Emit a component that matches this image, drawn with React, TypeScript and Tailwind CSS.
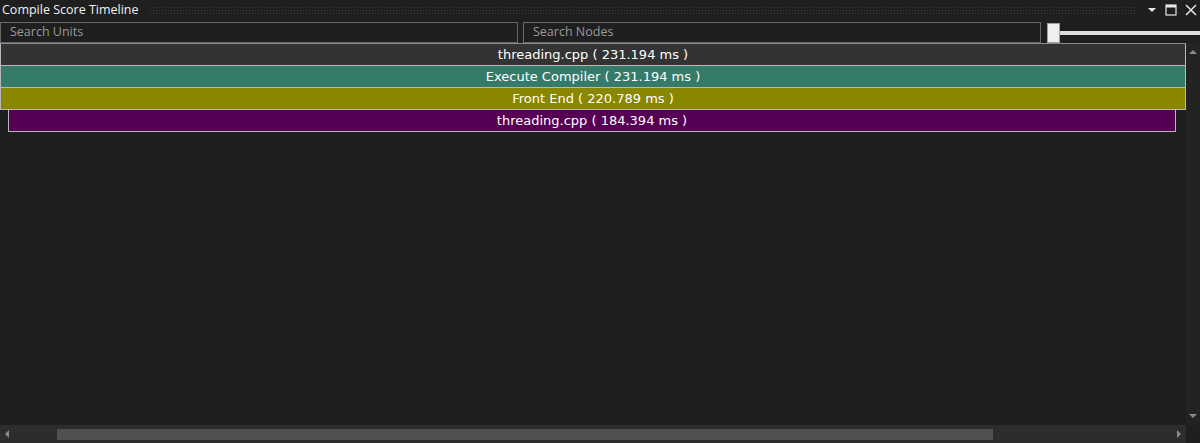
const bars = [
  { label: 'threading.cpp ( 231.194 ms )', color: '#333333', left: 0, right: 0 },
  { label: 'Execute Compiler ( 231.194 ms )', color: '#367b6a', left: 0, right: 0 },
  { label: 'Front End ( 220.789 ms )', color: '#898600', left: 0, right: 0 },
  { label: 'threading.cpp ( 184.394 ms )', color: '#550052', left: 8, right: 10 },
];

function SearchBox({ placeholder }: { placeholder: string }) {
  return (
    <div className="flex h-[21px] w-[518px] items-center border border-[#686868] bg-[#1f1f1f] px-[9px] text-[12.5px] text-[#9a9a9a]">
      {placeholder}
    </div>
  );
}

export default function App() {
  return (
    <div
      className="flex h-[443px] w-[1200px] flex-col overflow-hidden bg-[#1f1f1f] text-white"
      style={{ fontFamily: '"Open Sans", "Noto Sans", sans-serif' }}
    >
      {/* tool window title */}
      <div className="flex h-[19px] items-center pt-[1px]">
        <span className="pl-[2px] pr-[8px] text-[12.5px] leading-none text-[#f1f1f1]">Compile Score Timeline</span>
        <div className="mx-[2px] h-[9px] flex-1 bg-[radial-gradient(#3c3c3c_0.9px,transparent_1px)] bg-[length:3px_3px]" />
        <div className="flex items-center gap-[8px] pl-[8px] pr-[3px]">
          <svg width="10" height="6" viewBox="0 0 10 6">
            <path d="M1 1h8L5 5z" fill="#e6e6e6" />
          </svg>
          <svg width="12" height="12" viewBox="0 0 12 12">
            <rect x="1" y="1" width="10" height="10" fill="none" stroke="#e6e6e6" strokeWidth="1.2" />
            <rect x="1" y="1" width="10" height="2.5" fill="#e6e6e6" />
          </svg>
          <svg width="12" height="12" viewBox="0 0 12 12">
            <path d="M1 1l10 10M11 1L1 11" stroke="#e6e6e6" strokeWidth="1.5" />
          </svg>
        </div>
      </div>

      {/* search row */}
      <div className="mt-[3px] flex h-[21px] items-center gap-[5px]">
        <SearchBox placeholder="Search Units" />
        <SearchBox placeholder="Search Nodes" />
        <div className="ml-[1px] flex h-[21px] flex-1 items-center">
          <div className="z-10 h-[20px] w-[13px] border border-[#a0a0a0] bg-[#efefef]" />
          <div className="h-[4px] flex-1 bg-[#dcdcdc]" />
        </div>
      </div>

      {/* timeline + vertical scrollbar */}
      <div className="flex flex-1">
        <div className="flex flex-1 flex-col border-t border-[#8a8a8a]">
          {bars.map((b) => (
            <div
              key={b.label + b.color}
              className="flex h-[22px] items-center justify-center border border-t-0 border-[#b8b8b8] text-white"
              style={{
                backgroundColor: b.color,
                marginLeft: b.left,
                marginRight: b.right,
                fontFamily: '"DejaVu Sans", Verdana, sans-serif',
                fontSize: 13,
              }}
            >
              {b.label}
            </div>
          ))}
        </div>
        <div className="flex w-[14px] flex-col items-center justify-between bg-[#232323] py-[6px]">
          <svg width="10" height="6" viewBox="0 0 10 6">
            <path d="M1 5h8L5 1z" fill="#8a8a8a" />
          </svg>
          <svg width="10" height="6" viewBox="0 0 10 6">
            <path d="M1 1h8L5 5z" fill="#8a8a8a" />
          </svg>
        </div>
      </div>

      {/* horizontal scrollbar */}
      <div className="flex h-[18px]">
        <div className="flex flex-1 items-center bg-[#2d2d2d]">
          <div className="flex w-[57px] items-center pl-[4px]">
            <svg width="6" height="10" viewBox="0 0 6 10">
              <path d="M5 1v8L1 5z" fill="#8a8a8a" />
            </svg>
          </div>
          <div className="h-[11px] w-[936px] bg-[#505050]" />
          <div className="flex flex-1 items-center justify-end pr-[4px]">
            <svg width="6" height="10" viewBox="0 0 6 10">
              <path d="M1 1v8L5 5z" fill="#8a8a8a" />
            </svg>
          </div>
        </div>
        <div className="w-[14px] bg-[#1f1f1f]" />
      </div>
    </div>
  );
}
